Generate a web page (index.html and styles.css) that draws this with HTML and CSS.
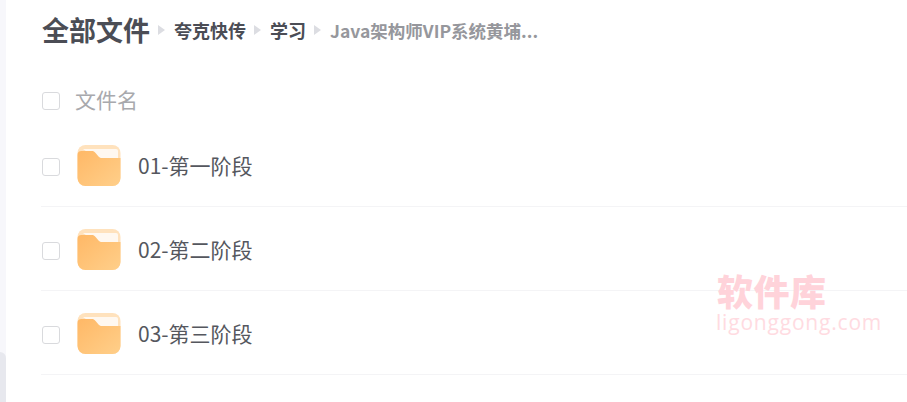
FILE: index.html
```html
<!DOCTYPE html>
<html lang="zh-CN">
<head>
  <meta charset="UTF-8" />
  <title>全部文件</title>
  <link rel="stylesheet" href="styles.css">
</head>
<body>
  <div class="sidebar"><div class="side-thumb"></div></div>
  <div class="main">
    <div class="crumbs">
      <span class="crumb-root">全部文件</span>
      <span class="crumb-arrow"></span>
      <span class="crumb">夸克快传</span>
      <span class="crumb-arrow"></span>
      <span class="crumb">学习</span>
      <span class="crumb-arrow"></span>
      <span class="crumb crumb-last">Java架构师VIP系统黄埔...</span>
    </div>

    <div class="list-head">
      <span class="check"></span>
      <span class="head-name">文件名</span>
    </div>

    <div class="file-row">
      <span class="check"></span>
      <svg class="folder" viewBox="0 0 44 42">
        <defs>
          <linearGradient id="fold1" x1="0" y1="0" x2="1" y2="1">
            <stop offset="0" stop-color="#ffb866"/>
            <stop offset="1" stop-color="#ffcf8a"/>
          </linearGradient>
        </defs>
        <rect x="0.5" y="0" width="43" height="41" rx="8" fill="#ffe2bd"/>
        <path d="M6 4h33a2 2 0 0 1 2 2v8H20z" fill="#fff8f0"/>
        <path d="M0.500 10a4 4 0 0 1 4-4h10c2 0 3 .6 4.300 2.200l2.500 3c1 1.200 2 1.800 3.700 1.800H43.500V33a8 8 0 0 1-8 8H8.500a8 8 0 0 1-8-8z" fill="url(#fold1)"/>
      </svg>
      <span class="file-name">01-第一阶段</span>
    </div>
    <div class="file-row">
      <span class="check"></span>
      <svg class="folder" viewBox="0 0 44 42">
        <rect x="0.5" y="0" width="43" height="41" rx="8" fill="#ffe2bd"/>
        <path d="M6 4h33a2 2 0 0 1 2 2v8H20z" fill="#fff8f0"/>
        <path d="M0.500 10a4 4 0 0 1 4-4h10c2 0 3 .6 4.300 2.200l2.500 3c1 1.200 2 1.800 3.700 1.800H43.500V33a8 8 0 0 1-8 8H8.500a8 8 0 0 1-8-8z" fill="url(#fold1)"/>
      </svg>
      <span class="file-name">02-第二阶段</span>
    </div>
    <div class="file-row">
      <span class="check"></span>
      <svg class="folder" viewBox="0 0 44 42">
        <rect x="0.5" y="0" width="43" height="41" rx="8" fill="#ffe2bd"/>
        <path d="M6 4h33a2 2 0 0 1 2 2v8H20z" fill="#fff8f0"/>
        <path d="M0.500 10a4 4 0 0 1 4-4h10c2 0 3 .6 4.300 2.200l2.500 3c1 1.200 2 1.800 3.700 1.800H43.500V33a8 8 0 0 1-8 8H8.500a8 8 0 0 1-8-8z" fill="url(#fold1)"/>
      </svg>
      <span class="file-name">03-第三阶段</span>
    </div>
  </div>

  <div class="watermark">
    <div class="wm-title">软件库</div>
    <div class="wm-url">ligonggong.com</div>
  </div>
</body>
</html>
```

FILE: styles.css
```css
* {
  box-sizing: border-box;
  margin: 0;
  padding: 0;
}

html, body {
  height: 100%;
  overflow: hidden;
}

body {
  display: flex;
  background: #fff;
  font-family: "Noto Sans CJK SC", "Liberation Sans", sans-serif;
}

.sidebar {
  width: 6px;
  height: 100%;
  flex-shrink: 0;
  background: #f7f7fb;
  padding-top: 352px;
}

.side-thumb {
  height: 50px;
  background: #e7e8ee;
  border-top-right-radius: 8px;
}

.main {
  flex: 1;
  padding: 11px 0 0 35px;
}

.crumbs {
  display: flex;
  align-items: center;
  height: 38px;
  padding-left: 1px;
  color: #4b4d55;
  font-weight: 700;
  white-space: nowrap;
}

.crumb-root {
  font-size: 27px;
  line-height: 38px;
}

.crumb {
  font-size: 18px;
}

.crumb-last {
  font-size: 17.500px;
  color: #96979c;
}

.crumb-arrow {
  width: 0;
  height: 0;
  margin: 0 9px 1px 8px;
  border-left: 7px solid #dcdde2;
  border-top: 5px solid transparent;
  border-bottom: 5px solid transparent;
}

.list-head {
  display: flex;
  align-items: center;
  height: 34px;
  margin-top: 34px;
  margin-bottom: 6px;
  padding-left: 1px;
}

.list-head .check {
  margin-top: 2px;
}

.head-name {
  margin-left: 15px;
  margin-bottom: 2px;
  font-size: 21px;
  color: #a8a9ad;
}

.check {
  width: 18px;
  height: 18px;
  flex-shrink: 0;
  background: #fff;
  border: 1px solid #d9dadd;
  border-radius: 3px;
}

.file-row {
  display: flex;
  align-items: center;
  height: 84px;
  padding: 4px 0 0 1px;
  border-bottom: 1px solid #f4f4f6;
}

.folder {
  width: 44px;
  height: 42px;
  margin: 0 17px 2px 17px;
  flex-shrink: 0;
}

.file-name {
  margin-bottom: 4px;
  font-size: 21px;
  color: #55575e;
}

.watermark {
  position: absolute;
  left: 716px;
  top: 270px;
  width: 170px;
  color: #ffd3da;
}

.wm-title {
  padding-left: 1px;
  font-size: 36px;
  line-height: 40px;
  font-weight: 900;
  letter-spacing: 0.500px;
}

.wm-url {
  font-family: "Open Sans", sans-serif;
  font-size: 21px;
  line-height: 24px;
  letter-spacing: 0.800px;
  opacity: 0.8;
}
```
